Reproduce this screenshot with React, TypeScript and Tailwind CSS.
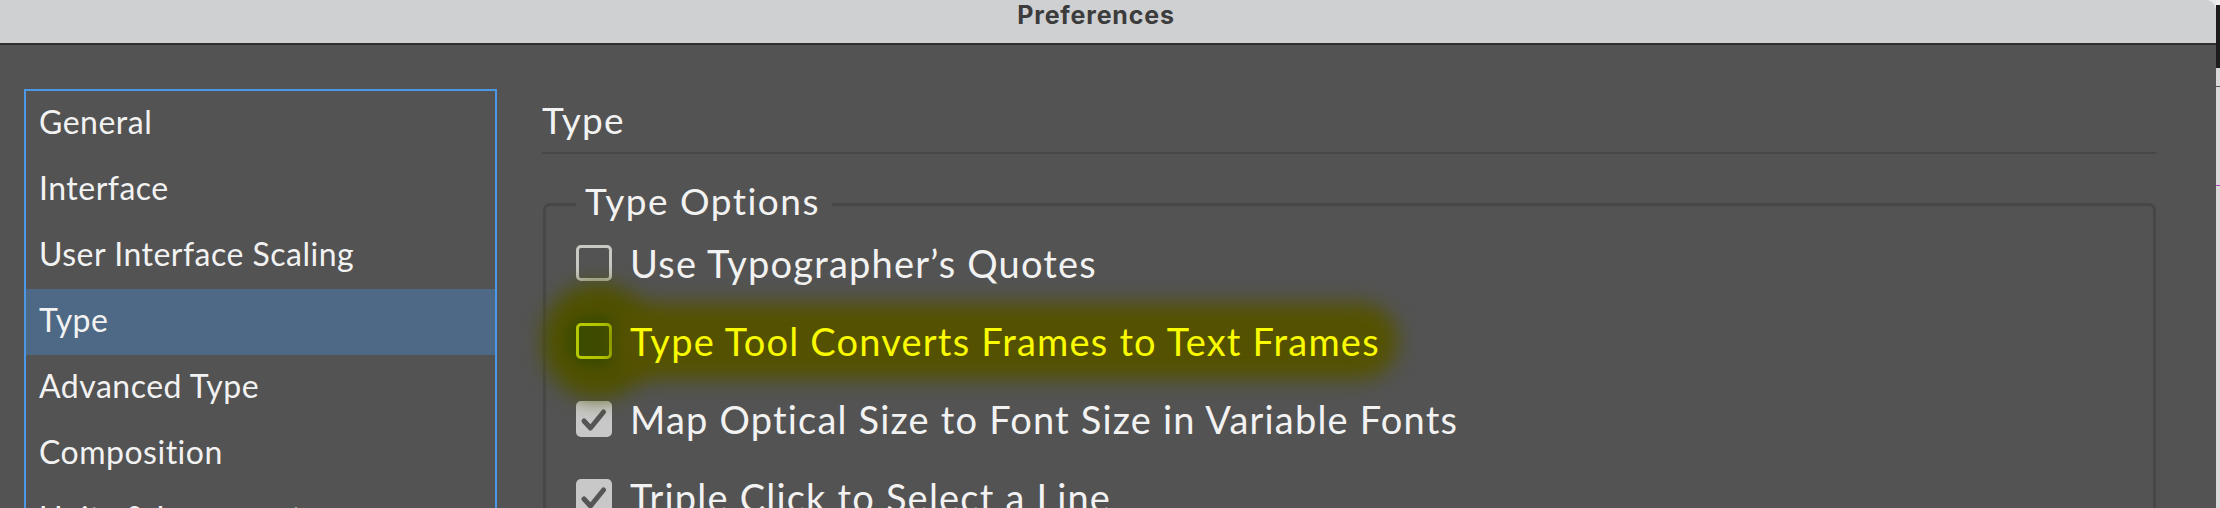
import { useState } from "react";

interface TypeOption {
  label: string;
  checked: boolean;
  highlighted?: boolean;
}

const sections = [
  "General",
  "Interface",
  "User Interface Scaling",
  "Type",
  "Advanced Type",
  "Composition",
  "Units & Increments",
  "Grids",
  "Guides & Pasteboard",
];

const initialOptions: TypeOption[] = [
  { label: "Use Typographer’s Quotes", checked: false },
  { label: "Type Tool Converts Frames to Text Frames", checked: false, highlighted: true },
  { label: "Map Optical Size to Font Size in Variable Fonts", checked: true },
  { label: "Triple Click to Select a Line", checked: true },
  { label: "Apply Leading to Entire Paragraphs", checked: false },
];

function CheckBox({ checked, highlighted }: { checked: boolean; highlighted?: boolean }) {
  if (checked) {
    return (
      <span className="flex h-[36px] w-[36px] shrink-0 items-center justify-center rounded-[5px] bg-[#c8c8c8]">
        <svg width="36" height="36" viewBox="0 0 36 36" fill="none">
          <path d="M8 20 L14.5 27 L27.5 11" stroke="#555555" strokeWidth="5" strokeLinecap="round" strokeLinejoin="round" />
        </svg>
      </span>
    );
  }
  if (highlighted) {
    return (
      <span className="relative h-[36px] w-[36px] shrink-0">
        {/* glow behind the box */}
        <span className="absolute left-[-34px] top-[-40px] h-[116px] w-[112px] rounded-full bg-[#4f5100] blur-[10px]" />
        <span className="absolute left-[-11px] top-[-9px] h-[54px] w-[60px] rounded-full bg-[#3f4b00] blur-[5px]" />
        <span className="relative block h-[36px] w-[36px] rounded-[5px] border-[3px] border-[#b5c900] bg-[#3d4b00]" />
      </span>
    );
  }
  return <span className="h-[36px] w-[36px] shrink-0 rounded-[5px] border-[3px] border-[#c9c9c4]" />;
}

export default function App() {
  const [selected, setSelected] = useState("Type");
  const [options, setOptions] = useState(initialOptions);

  const toggle = (index: number) => {
    setOptions((prev) => prev.map((o, i) => (i === index ? { ...o, checked: !o.checked } : o)));
  };

  return (
    <div className="flex h-[508px] w-[2220px] overflow-hidden bg-[#e9e9e9]">
      <div className="flex h-full w-[2216px] shrink-0 flex-col overflow-hidden rounded-tr-[10px]">
        {/* title bar */}
        <div className="flex h-[45px] shrink-0 justify-center border-b-2 border-[#2f2f2f] bg-[#cfd0d2] pr-[24px] pt-[3px]">
          <span className="font-[Inter,sans-serif] text-[25px] font-bold leading-none tracking-[0.8px] text-[#3c3c3c]">
            Preferences
          </span>
        </div>

        {/* body */}
        <div className="flex flex-1 bg-[#535353] pl-[24px] pt-[44px]">
          <div className="h-[520px] w-[473px] shrink-0 overflow-hidden border-2 border-[#4b98e6] font-[Lato,sans-serif] text-[32px] tracking-[0.5px] text-[#f2f2f2]">
            {sections.map((s) => (
              <div
                key={s}
                onClick={() => setSelected(s)}
                className={`h-[66px] cursor-default pl-[13px] leading-[62px] ${selected === s ? "bg-[#4e6985]" : ""}`}
              >
                {s}
              </div>
            ))}
          </div>

          <div className="ml-[45px] flex w-[1614px] flex-col font-[Lato,sans-serif] text-[#f2f2f2]">
            <div className="pt-[7px] text-[37px] leading-[48px] tracking-[1.2px]">Type</div>
            <div className="mt-[8px] h-[2px] bg-[#474747]" />

            <fieldset className="ml-[1px] mt-[27px] rounded-[7px] border-[3px] border-[#474747] pl-[30px]">
              <legend className="pb-[6px] pl-[9px] pr-[12px] text-[37px] leading-[40px] tracking-[1.5px]">Type Options</legend>
              <div className="-mt-[3px] flex flex-col">
                {options.map((o, i) => (
                  <label key={o.label} className="flex h-[78px] cursor-default items-center gap-[18px]" onClick={() => toggle(i)}>
                    <CheckBox checked={o.checked} highlighted={o.highlighted} />
                    {o.highlighted ? (
                      <span className="relative text-[38px] leading-[44px] tracking-[1.2px] text-[#fafa00]">
                        <span className="absolute -inset-x-[18px] -inset-y-[16px] rounded-full bg-[#545200] blur-[10px]" />
                        <span className="relative">{o.label}</span>
                      </span>
                    ) : (
                      <span className="text-[38px] leading-[44px] tracking-[1.2px]">{o.label}</span>
                    )}
                  </label>
                ))}
              </div>
            </fieldset>
          </div>
        </div>
      </div>

      {/* sliver of the window behind */}
      <div className="flex w-[4px] shrink-0 flex-col">
        <div className="h-[5px] bg-[#eeeeee]" />
        <div className="h-[63px] bg-[#1d1d1d]" />
        <div className="h-[18px] bg-[#d9d9d9]" />
        <div className="h-[1px] bg-[#555555]" />
        <div className="h-[98px] bg-[#d9d9d9]" />
        <div className="h-[1px] bg-[#b23fc4]" />
        <div className="flex-1 bg-[#d9d9d9]" />
      </div>
    </div>
  );
}
